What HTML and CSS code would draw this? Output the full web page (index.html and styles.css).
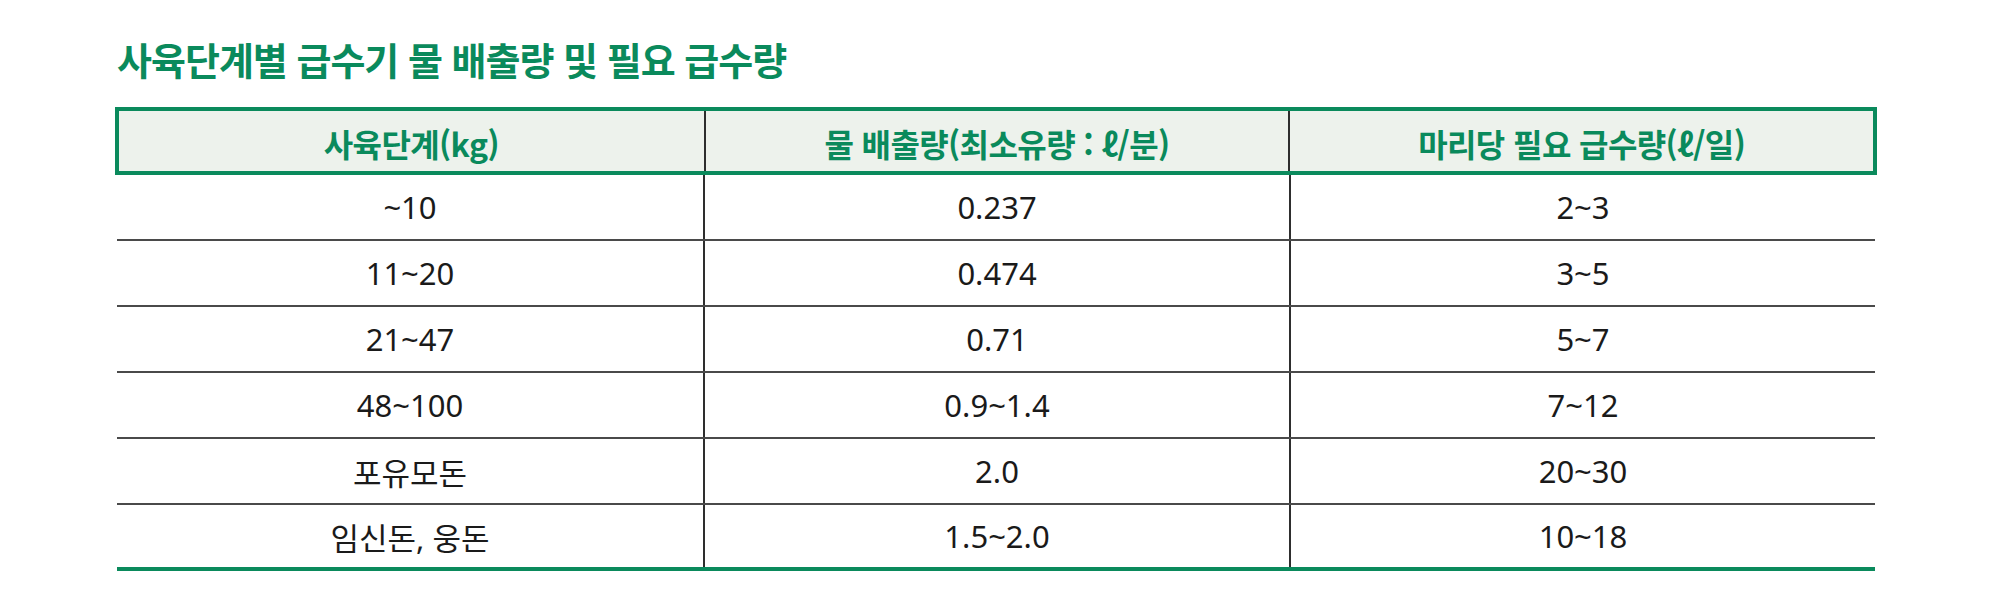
FILE: index.html
```html
<!DOCTYPE html>
<html lang="ko">
<head>
<meta charset="utf-8">
<title>사육단계별 급수기 물 배출량 및 필요 급수량</title>
<link rel="stylesheet" href="styles.css">
</head>
<body>
<div class="page">
  <h1 class="title">사육단계별 급수기 물 배출량 및 필요 급수량</h1>
  <div class="tbl">
    <div class="row head">
      <div class="cell">사육단계(kg)</div>
      <div class="cell">물 배출량(최소유량 : ℓ/분)</div>
      <div class="cell">마리당 필요 급수량(ℓ/일)</div>
    </div>
    <div class="row">
      <div class="cell">~10</div>
      <div class="cell">0.237</div>
      <div class="cell">2~3</div>
    </div>
    <div class="row">
      <div class="cell">11~20</div>
      <div class="cell">0.474</div>
      <div class="cell">3~5</div>
    </div>
    <div class="row">
      <div class="cell">21~47</div>
      <div class="cell">0.71</div>
      <div class="cell">5~7</div>
    </div>
    <div class="row">
      <div class="cell">48~100</div>
      <div class="cell">0.9~1.4</div>
      <div class="cell">7~12</div>
    </div>
    <div class="row">
      <div class="cell">포유모돈</div>
      <div class="cell">2.0</div>
      <div class="cell">20~30</div>
    </div>
    <div class="row last">
      <div class="cell">임신돈, 웅돈</div>
      <div class="cell">1.5~2.0</div>
      <div class="cell">10~18</div>
    </div>
  </div>
</div>
</body>
</html>
```

FILE: styles.css
```css
html, body {
  margin: 0;
  padding: 0;
  background: #ffffff;
}

.page {
  padding: 36px 0 0 115px;
  font-family: "Noto Sans", "Noto Sans CJK KR", sans-serif;
  color: #1a1a1a;
}

.title {
  margin: 0 0 25px 2px;
  font-family: "Noto Sans CJK KR", sans-serif;
  font-size: 38px;
  line-height: 46px;
  font-weight: 700;
  letter-spacing: -1px;
  color: #0a8a5c;
}

.tbl {
  width: 1762px;
}

.row {
  display: grid;
  grid-template-columns: 1fr 1fr 1fr;
  height: 66px;
  box-sizing: border-box;
  border-bottom: 2px solid #4a4a4a;
  margin: 0 2px;
}

.row.head {
  height: 68px;
  margin: 0;
  border: 4px solid #0a8a5c;
  background: #edf2ec;
}

.row.last {
  height: 66px;
  border-bottom: 4px solid #0a8a5c;
}

.cell {
  display: flex;
  align-items: center;
  justify-content: center;
  font-size: 31px;
  letter-spacing: 0;
}

.cell + .cell {
  border-left: 2px solid #2e2e2e;
}

.head .cell {
  font-family: "Noto Sans CJK KR", sans-serif;
  font-size: 32px;
  font-weight: 700;
  letter-spacing: -0.6px;
  color: #0a8a5c;
  padding-top: 4px;
}
```
